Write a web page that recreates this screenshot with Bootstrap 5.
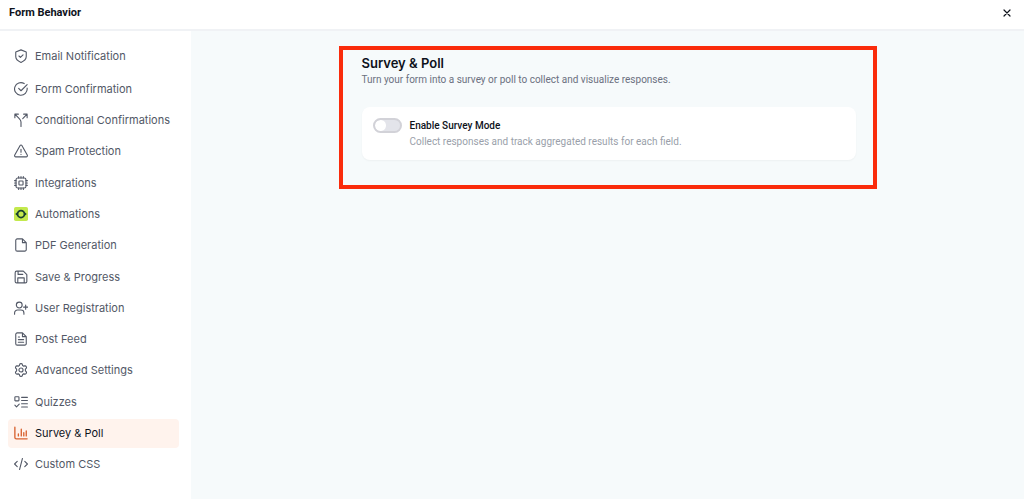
<!DOCTYPE html>
<html lang="en">
<head>
<meta charset="utf-8">
<meta name="viewport" content="width=device-width, initial-scale=1">
<title>Form Behavior</title>
<link rel="stylesheet" href="https://cdn.jsdelivr.net/npm/bootstrap@5.3.0/dist/css/bootstrap.min.css">
<style>
  body { font-family: Inter, "Liberation Sans", sans-serif; color: #0e121b; background: #fff; }
  .topbar { height: 31px; padding: 0 9px 4px; border-bottom: 2px solid #f0f2f5; }
  .topbar h1 { font-family: Roboto, sans-serif; font-size: 11px; line-height: 16px; font-weight: 700; }
  .close-btn { width: 16px; height: 16px; color: #0e121b; }
  .close-btn .ico { stroke-width: 1.2; }
  .sidebar { width: 191px; padding: 10px 12px 20px 8px; }
  .side-link { height: 29px; padding: 0 6px; gap: 7px; border-radius: 4px; font-size: 11px; line-height: 16px; color: #525866; white-space: nowrap; }
  .side-link:first-child { margin-bottom: 2px; }
  .side-link svg { width: 14px; height: 14px; flex: none; }
  .side-link.active { background: #fff3ed; color: #0e121b; }
  .side-link.active svg { color: #d9622f; stroke-width: 2.3; }
  .ico { fill: none; stroke: currentColor; stroke-width: 1.9; stroke-linecap: round; stroke-linejoin: round; }
  .main-area { background: #f6fafb; padding: 15px 16px; }
  .highlight { max-width: 538px; border: 4px solid #fa2b0b; padding: 3px 17px 25px 19px; }
  .highlight h2 { font-size: 13px; line-height: 20px; font-weight: 600; }
  .intro { font-family: Roboto, sans-serif; font-size: 10px; line-height: 14px; color: #6b7080; }
  .panel { margin-top: 20px; padding: 11px; gap: 8px; border-radius: 8px; background: #fff; box-shadow: 0 1px 2px #0e121b0a; font-family: Roboto, sans-serif; }
  .form-switch .toggle { width: 29px; height: 15px; margin: 0; border: 2px solid #d2d2d8; background-color: #e3e4ea; background-size: 11px 11px; background-repeat: no-repeat; box-shadow: none;
    background-image: radial-gradient(circle, #fff 5px, transparent 6px); }
  .panel label { font-size: 10px; line-height: 16px; font-weight: 500; }
  .hint { font-size: 10px; line-height: 15px; color: #9a9faa; }
</style>
</head>
<body class="d-flex flex-column min-vh-100">
<header class="topbar d-flex align-items-center justify-content-between">
  <h1 class="m-0">Form Behavior</h1>
  <button type="button" class="close-btn btn p-0 border-0 d-flex align-items-center justify-content-center" aria-label="Close">
    <svg class="ico" width="8" height="8" viewBox="0 0 8 8"><path d="M1 1l6 6M7 1L1 7"/></svg>
  </button>
</header>
<div class="d-flex flex-grow-1">
  <nav class="sidebar d-flex flex-column justify-content-between flex-shrink-0" aria-label="Form settings">
    <a href="#" class="side-link d-flex align-items-center text-decoration-none"><svg class="ico" viewBox="0 0 24 24"><path d="M12 1.500 21 5v8c0 4.500-4 8-9 10-5-2-9-5.500-9-10V5z"/><path d="m8.500 12 2.500 2.500 4.500-4.500"/></svg>Email Notification</a>
    <a href="#" class="side-link d-flex align-items-center text-decoration-none"><svg class="ico" viewBox="0 0 24 24"><path d="M22.500 10.500A10.800 10.800 0 1 1 17.500 2.700"/><path d="m8 11 4 4L22.500 4.500"/></svg>Form Confirmation</a>
    <a href="#" class="side-link d-flex align-items-center text-decoration-none"><svg class="ico" viewBox="0 0 24 24"><path d="M1.500 8V2h6M16.500 2h6v6M2 2.500l7 7c2 2 3 3.500 3 6V23M22 2.500l-7 7"/></svg>Conditional Confirmations</a>
    <a href="#" class="side-link d-flex align-items-center text-decoration-none"><svg class="ico" viewBox="0 0 24 24"><path d="M10.500 2.500 1.300 19a2 2 0 0 0 1.700 3h18a2 2 0 0 0 1.700-3L13.500 2.500a1.700 1.700 0 0 0-3 0zM12 9v5M12 17.800v.2"/></svg>Spam Protection</a>
    <a href="#" class="side-link d-flex align-items-center text-decoration-none"><svg class="ico" viewBox="0 0 24 24"><rect x="3.500" y="3.500" width="17" height="17" rx="3"/><rect x="8.500" y="8.500" width="7" height="7" rx="1"/><path d="M8 3.500V1M12 3.500V1M16 3.500V1M8 23v-2.500M12 23v-2.500M16 23v-2.500M3.500 8H1M3.500 12H1M3.500 16H1M23 8h-2.500M23 12h-2.500M23 16h-2.500"/></svg>Integrations</a>
    <a href="#" class="side-link d-flex align-items-center text-decoration-none"><svg viewBox="0 0 24 24"><rect width="24" height="24" rx="3" fill="#c3e94d"/><circle cx="12" cy="12" r="6" fill="none" stroke="#17402f" stroke-width="3"/><path d="m2 12 5-4v8zM22 12l-5-4v8z" fill="#17402f"/></svg>Automations</a>
    <a href="#" class="side-link d-flex align-items-center text-decoration-none"><svg class="ico" viewBox="0 0 24 24"><path d="M14.500 1.500H5.500a2.500 2.500 0 0 0-2.500 2.500v16a2.500 2.500 0 0 0 2.500 2.500h13A2.500 2.500 0 0 0 21 20V8zV8H21"/></svg>PDF Generation</a>
    <a href="#" class="side-link d-flex align-items-center text-decoration-none"><svg class="ico" viewBox="0 0 24 24"><path d="M16 2H4.500A2.500 2.500 0 0 0 2 4.500v15A2.500 2.500 0 0 0 4.500 22h15a2.500 2.500 0 0 0 2.500-2.500V8zM6.500 22v-8.500h11V22M7 2v5.500h8"/></svg>Save &amp; Progress</a>
    <a href="#" class="side-link d-flex align-items-center text-decoration-none"><svg class="ico" viewBox="0 0 24 24"><circle cx="9" cy="7" r="5"/><path d="M1 22.500v-2a5 5 0 0 1 5-5h6a5 5 0 0 1 5 5v2M20 7v7M16.500 10.500h7"/></svg>User Registration</a>
    <a href="#" class="side-link d-flex align-items-center text-decoration-none"><svg class="ico" viewBox="0 0 24 24"><path d="M14.500 1.500H5.500a2.500 2.500 0 0 0-2.500 2.500v16a2.500 2.500 0 0 0 2.500 2.500h13A2.500 2.500 0 0 0 21 20V8zV8H21M7.500 8.500h2M7.500 13h9M7.500 17.500h9"/></svg>Post Feed</a>
    <a href="#" class="side-link d-flex align-items-center text-decoration-none"><svg class="ico" viewBox="0 0 24 24"><circle cx="12" cy="12" r="3.500"/><path d="M9.700 2.500Q10 1 12 1t2.300 1.500l.5 1.800 1.900 1.100 1.900-.5q1.600-.3 2.500 1.400t-.2 2.900L19.500 10.700v2.600l1.400 1.500q1.100 1.200.2 2.900t-2.500 1.400l-1.900-.5-1.900 1.100-.5 1.800Q14 23 12 23t-2.300-1.500l-.5-1.800-1.900-1.100-1.900.5q-1.600.3-2.500-1.400t.2-2.900l1.400-1.500v-2.600L3.100 9.200Q2 8 2.900 6.300t2.500-1.400l1.900.5 1.900-1.100z"/></svg>Advanced Settings</a>
    <a href="#" class="side-link d-flex align-items-center text-decoration-none"><svg class="ico" viewBox="0 0 24 24"><rect x="1.500" y="3" width="7" height="7" rx="1"/><path d="m1.500 17.500 2.800 2.800L9 15.500M13 4h10M13 9.500h10M13 15h10M13 20.500h10"/></svg>Quizzes</a>
    <a href="#" class="side-link active d-flex align-items-center text-decoration-none" aria-current="page"><svg class="ico" viewBox="0 0 24 24"><path d="M1.500 2v17.500a2.500 2.500 0 0 0 2.500 2.500h18.500M7.500 13.500V17M12.500 5.500V17M16.800 11.500V17M21 8.500V17"/></svg>Survey &amp; Poll</a>
    <a href="#" class="side-link d-flex align-items-center text-decoration-none"><svg class="ico" viewBox="0 0 24 24"><path d="m5.500 7.500-4.500 4.500 4.500 4.500M18.500 7.500 23 12l-4.500 4.500M14.500 2.500l-5 19"/></svg>Custom CSS</a>
  </nav>
  <main class="main-area flex-grow-1">
    <section class="highlight mx-auto">
      <h2 class="m-0">Survey &amp; Poll</h2>
      <p class="intro m-0">Turn your form into a survey or poll to collect and visualize responses.</p>
      <div class="panel d-flex align-items-start">
        <div class="form-switch p-0 d-flex"><input class="form-check-input toggle" type="checkbox" role="switch" id="surveyMode" aria-describedby="surveyHint"></div>
        <div>
          <label class="d-block" for="surveyMode">Enable Survey Mode</label>
          <p class="hint m-0" id="surveyHint">Collect responses and track aggregated results for each field.</p>
        </div>
      </div>
    </section>
  </main>
</div>
<script src="https://cdn.jsdelivr.net/npm/bootstrap@5.3.0/dist/js/bootstrap.bundle.min.js"></script>
</body>
</html>
